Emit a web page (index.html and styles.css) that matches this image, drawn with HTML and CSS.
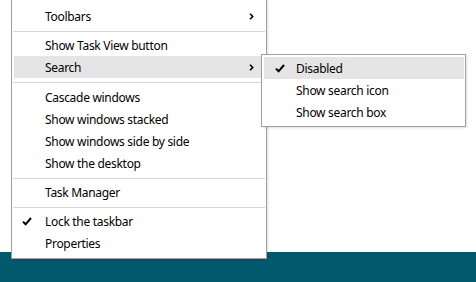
FILE: index.html
```html
<!DOCTYPE html>
<html>
<head>
<meta charset="utf-8">
<link rel="stylesheet" href="styles.css">
</head>
<body>
<div class="desktop">
  <div class="wallpaper"></div>
  <div class="taskbar"></div>

  <div class="menu main-menu">
    <div class="item"><span class="slot"></span><span class="label">Toolbars</span>
      <svg class="chev" width="5" height="7" viewBox="0 0 5 7"><path d="M1 0.8 L3.7 3.5 L1 6.2" fill="none" stroke="#000" stroke-width="1.6"/></svg></div>
    <div class="sep"></div>
    <div class="item"><span class="slot"></span><span class="label">Show Task View button</span></div>
    <div class="item hover"><span class="slot"></span><span class="label">Search</span>
      <svg class="chev" width="5" height="7" viewBox="0 0 5 7"><path d="M1 0.8 L3.7 3.5 L1 6.2" fill="none" stroke="#000" stroke-width="1.6"/></svg></div>
    <div class="sep sep-wide"></div>
    <div class="item"><span class="slot"></span><span class="label">Cascade windows</span></div>
    <div class="item"><span class="slot"></span><span class="label">Show windows stacked</span></div>
    <div class="item"><span class="slot"></span><span class="label">Show windows side by side</span></div>
    <div class="item"><span class="slot"></span><span class="label">Show the desktop</span></div>
    <div class="sep"></div>
    <div class="item"><span class="slot"></span><span class="label">Task Manager</span></div>
    <div class="sep"></div>
    <div class="item"><span class="slot"><svg class="check" width="10" height="9" viewBox="0 0 10 9"><path d="M1 4.6 L3.6 7.3 L9 1" fill="none" stroke="#000" stroke-width="2"/></svg></span><span class="label">Lock the taskbar</span></div>
    <div class="item"><span class="slot"></span><span class="label">Properties</span></div>
  </div>

  <div class="menu sub-menu">
    <div class="item hover"><span class="slot"><svg class="check" width="10" height="9" viewBox="0 0 10 9"><path d="M1 4.6 L3.6 7.3 L9 1" fill="none" stroke="#000" stroke-width="2"/></svg></span><span class="label">Disabled</span></div>
    <div class="item"><span class="slot"></span><span class="label">Show search icon</span></div>
    <div class="item"><span class="slot"></span><span class="label">Show search box</span></div>
  </div>
</div>
</body>
</html>
```

FILE: styles.css
```css
html, body {
  margin: 0;
  padding: 0;
}
body {
  width: 476px;
  height: 282px;
  overflow: hidden;
  font-family: "Noto Sans", "Open Sans", sans-serif;
  font-size: 12px;
  letter-spacing: -0.3px;
  color: #000;
}
.desktop {
  position: relative;
  width: 476px;
  height: 282px;
  display: flex;
  flex-direction: column;
  background: #fff;
}
.wallpaper {
  flex: 1;
}
.taskbar {
  height: 30px;
  background: #005a6b;
}
.menu {
  position: absolute;
  box-sizing: border-box;
  background: #fff;
  border: 1px solid #a0a0a0;
  display: flex;
  flex-direction: column;
  box-shadow: 1px 1px 2px rgba(0,0,0,0.12);
}
.main-menu {
  left: 11px;
  top: -1px;
  width: 256px;
  padding: 5px 2px 4px 2px;
}
.sub-menu {
  left: 261px;
  top: 54px;
  width: 205px;
  padding: 2px 1px 3px 2px;
}
.item {
  height: 22px;
  display: flex;
  align-items: center;
  white-space: nowrap;
}
.item.hover {
  background: #e5e5e5;
}
.slot {
  flex: none;
  width: 31px;
  height: 22px;
  display: flex;
  align-items: center;
}
.sub-menu .slot {
  width: 32px;
}
.check {
  margin-left: 8px;
}
.sub-menu .check {
  margin-left: 11px;
}
.label {
  flex: none;
}
.chev {
  margin-left: auto;
  margin-right: 10px;
}
.sep {
  height: 1px;
  background: #d7d7d7;
  margin: 4px -1px 2px -1px;
}
.sep-wide {
  margin-bottom: 3px;
}
```
